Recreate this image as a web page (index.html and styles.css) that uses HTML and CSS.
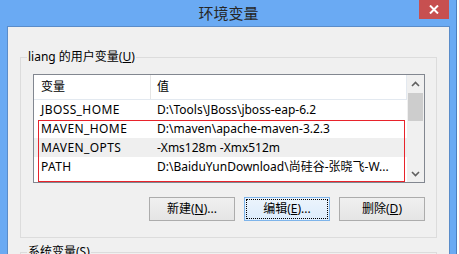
FILE: index.html
```html
<!DOCTYPE html>
<html lang="zh-CN">
<head>
<meta charset="utf-8">
<title>环境变量</title>
<link rel="stylesheet" href="styles.css">
</head>
<body>
<div class="screen">
  <div class="window">
    <div class="titlebar">
      <div class="title">环境变量</div>
      <div class="close">
        <svg width="10" height="9" viewBox="0 0 10 9"><path d="M1 0.5 L9 8.5 M9 0.5 L1 8.5" stroke="#fff" stroke-width="2"/></svg>
      </div>
    </div>
    <div class="frame-row">
      <div class="client">
        <fieldset class="group">
          <legend>liang 的用户变量(<u>U</u>)</legend>
          <div class="listview">
            <div class="lv-main">
              <div class="lv-header">
                <div class="h1">变量</div>
                <div class="h2">值</div>
              </div>
              <div class="lv-row"><div class="c1">JBOSS_HOME</div><div class="c2">D:\Tools\JBoss\jboss-eap-6.2</div></div>
              <div class="lv-row"><div class="c1">MAVEN_HOME</div><div class="c2">D:\maven\apache-maven-3.2.3</div></div>
              <div class="lv-row hot"><div class="c1">MAVEN_OPTS</div><div class="c2">-Xms128m -Xmx512m</div></div>
              <div class="lv-row"><div class="c1">PATH</div><div class="c2">D:\BaiduYunDownload\尚硅谷-张晓飞-W...</div></div>
            </div>
            <div class="scrollbar">
              <div class="sb-btn"><svg width="9" height="6" viewBox="0 0 9 6"><path d="M1 5 L4.5 1.5 L8 5" fill="none" stroke="#606060" stroke-width="1.6"/></svg></div>
              <div class="sb-thumb"></div>
              <div class="sb-track"></div>
              <div class="sb-btn"><svg width="9" height="6" viewBox="0 0 9 6"><path d="M1 1 L4.5 4.5 L8 1" fill="none" stroke="#606060" stroke-width="1.6"/></svg></div>
            </div>
            <div class="annot"></div>
          </div>
          <div class="buttons">
            <div class="btn">新建(<u>N</u>)...</div>
            <div class="btn focused"><span class="focus-ring">编辑(<u>E</u>)...</span></div>
            <div class="btn">删除(<u>D</u>)</div>
          </div>
        </fieldset>
        <fieldset class="group group2">
          <legend>系统变量(<u>S</u>)</legend>
        </fieldset>
      </div>
    </div>
  </div>
  <div class="behind"></div>
</div>
</body>
</html>
```
FILE: styles.css
```css
html, body {
  margin: 0;
  padding: 0;
}
body {
  width: 459px;
  height: 254px;
  overflow: hidden;
  font-family: "Noto Sans", "Noto Sans CJK SC", sans-serif;
  font-size: 12px;
  color: #000;
}
.screen {
  display: flex;
  height: 254px;
}
.window {
  width: 456px;
  background: #6aaaf3;
  display: flex;
  flex-direction: column;
}
.behind {
  flex: 1;
  background: #fff;
  border-left: 1px solid #4c7fbf;
}
.titlebar {
  height: 28px;
  display: flex;
  padding-left: 8px;
  padding-right: 7px;
}
.title {
  flex: 1;
  padding-left: 30px;
  text-align: center;
  font-family: "Noto Sans CJK SC", sans-serif;
  font-size: 15px;
  line-height: 26px;
  height: 26px;
  color: #262626;
}
.close {
  width: 30px;
  height: 19px;
  background: #c75050;
  display: flex;
  align-items: center;
  justify-content: center;
}
.close svg { display: block; }
.frame-row {
  flex: 1;
  display: flex;
  padding-left: 7px;
}
.client {
  background: #f0f0f0;
  border: 1px solid #5a8cc9;
  border-bottom: none;
  padding: 22px 12px 0 12px;
  box-sizing: border-box;
  width: 443px;
}
.group {
  margin: 0;
  border: 1px solid #dcdcdc;
  padding: 9px 11px 16px 12px;
  min-width: 0;
}
.group legend {
  padding: 0 1px;
  margin-left: -6px;
  line-height: 16px;
}
.group2 {
  margin-top: 6px;
  padding: 0 11px 20px 12px;
}
.listview {
  position: relative;
  height: 109px;
  box-sizing: border-box;
  border: 1px solid #828790;
  background: #fff;
  display: flex;
}
.lv-main {
  flex: 1;
  min-width: 0;
}
.lv-header {
  display: grid;
  grid-template-columns: 117px 1fr;
  height: 24px;
  border-bottom: 1px solid #e3e9f0;
  border-right: 1px solid #e3e9f0;
  line-height: 24px;
}
.h1 {
  padding-left: 7px;
  border-right: 1px solid #e5e5e5;
}
.h2 {
  padding-left: 6px;
}
.lv-row {
  display: grid;
  grid-template-columns: 117px 1fr;
  height: 19px;
  line-height: 19px;
  white-space: nowrap;
}
.lv-row.hot {
  background: #efefef;
}
.c1 { padding-left: 7px; letter-spacing: 0.4px; }
.c2 { padding-left: 6px; overflow: hidden; }
.scrollbar {
  width: 17px;
  background: #f0f0f0;
  display: flex;
  flex-direction: column;
}
.sb-btn {
  height: 17px;
  display: flex;
  align-items: center;
  justify-content: center;
}
.sb-btn svg { display: block; }
.sb-thumb {
  height: 28px;
  margin: 1px 1px 0 1px;
  background: #cdcdcd;
}
.sb-track { flex: 1; }
.annot {
  position: absolute;
  left: 4px;
  top: 45px;
  width: 367px;
  height: 62px;
  box-sizing: border-box;
  border: 1px solid #e8232b;
  pointer-events: none;
}
.buttons {
  display: flex;
  justify-content: flex-end;
  gap: 9px;
  margin-top: 14px;
}
.btn {
  width: 86px;
  height: 24px;
  box-sizing: border-box;
  border: 1px solid #acacac;
  background: linear-gradient(#f0f0f0, #e5e5e5);
  display: flex;
  align-items: center;
  justify-content: center;
  line-height: 16px;
}
.btn.focused {
  border-color: #7eb4ea;
  background: linear-gradient(#ecf4fc, #dcecfc);
  padding: 1px;
}
.focus-ring {
  flex: 1;
  align-self: stretch;
  display: flex;
  align-items: center;
  justify-content: center;
  border: 1px dotted #000;
}
```
